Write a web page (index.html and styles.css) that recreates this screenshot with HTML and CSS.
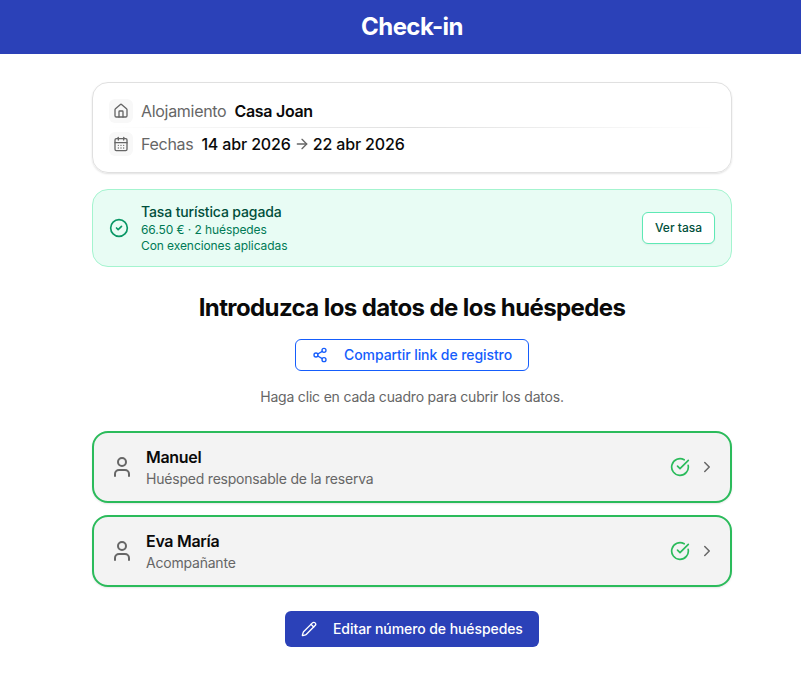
FILE: index.html
```html
<!DOCTYPE html>
<html lang="es">
<head>
    <meta charset="UTF-8">
    <meta name="viewport" content="width=device-width, initial-scale=1.0">
    <title>Check-in</title>
    <link rel="stylesheet" href="styles.css">
</head>
<body>
    <div class="page">
        <header class="topbar">
            <h1>Check-in</h1>
        </header>
        <main class="content">
            <section class="booking">
                <div class="booking-row">
                    <span class="icon-box">
                        <svg class="icon icon-16" viewBox="0 0 24 24"><path d="M15 21v-8a1 1 0 0 0-1-1h-4a1 1 0 0 0-1 1v8"/><path d="M3 10a2 2 0 0 1 .709-1.528l7-5.999a2 2 0 0 1 2.582 0l7 5.999A2 2 0 0 1 21 10v9a2 2 0 0 1-2 2H5a2 2 0 0 1-2-2z"/></svg>
                    </span>
                    <span class="label">Alojamiento</span>
                    <span class="value value-place">Casa Joan</span>
                </div>
                <div class="divider"></div>
                <div class="booking-row">
                    <span class="icon-box">
                        <svg class="icon icon-16" viewBox="0 0 24 24"><path d="M8 2v4"/><path d="M16 2v4"/><rect width="18" height="18" x="3" y="4" rx="2"/><path d="M3 10h18"/><path d="M8 14h.01"/><path d="M12 14h.01"/><path d="M16 14h.01"/><path d="M8 18h.01"/><path d="M12 18h.01"/><path d="M16 18h.01"/></svg>
                    </span>
                    <span class="label">Fechas</span>
                    <span class="value dates">
                        <span>14 abr 2026</span>
                        <svg class="icon icon-16 arrow" viewBox="0 0 24 24"><path d="M5 12h14"/><path d="m12 5 7 7-7 7"/></svg>
                        <span>22 abr 2026</span>
                    </span>
                </div>
            </section>

            <section class="tax">
                <svg class="icon icon-20 tax-icon" viewBox="0 0 24 24"><circle cx="12" cy="12" r="10"/><path d="m9 12 2 2 4-4"/></svg>
                <div class="tax-text">
                    <p class="tax-title">Tasa turística pagada</p>
                    <p class="tax-line">66.50 € · 2 huéspedes</p>
                    <p class="tax-line">Con exenciones aplicadas</p>
                </div>
                <button class="tax-button" type="button">Ver tasa</button>
            </section>

            <h2>Introduzca los datos de los huéspedes</h2>
            <button class="button share" type="button">
                <svg class="icon icon-16" viewBox="0 0 24 24"><circle cx="18" cy="5" r="3"/><circle cx="6" cy="12" r="3"/><circle cx="18" cy="19" r="3"/><path d="m8.59 13.51 6.83 3.98"/><path d="m15.41 6.51-6.82 3.98"/></svg>
                <span>Compartir link de registro</span>
            </button>
            <p class="hint">Haga clic en cada cuadro para cubrir los datos.</p>

            <div class="guests">
                <div class="guest">
                    <svg class="icon icon-24" viewBox="0 0 24 24"><path d="M19 21v-2a4 4 0 0 0-4-4H9a4 4 0 0 0-4 4v2"/><circle cx="12" cy="7" r="4"/></svg>
                    <div class="guest-text">
                        <p class="guest-name">Manuel</p>
                        <p class="guest-role">Huésped responsable de la reserva</p>
                    </div>
                    <svg class="icon icon-20 done" viewBox="0 0 24 24"><path d="M21.801 10A10 10 0 1 1 17 3.335"/><path d="m9 11 3 3L22 4"/></svg>
                    <svg class="icon chevron" viewBox="0 0 24 24"><path d="m9 18 6-6-6-6"/></svg>
                </div>
                <div class="guest">
                    <svg class="icon icon-24" viewBox="0 0 24 24"><path d="M19 21v-2a4 4 0 0 0-4-4H9a4 4 0 0 0-4 4v2"/><circle cx="12" cy="7" r="4"/></svg>
                    <div class="guest-text">
                        <p class="guest-name">Eva María</p>
                        <p class="guest-role">Acompañante</p>
                    </div>
                    <svg class="icon icon-20 done" viewBox="0 0 24 24"><path d="M21.801 10A10 10 0 1 1 17 3.335"/><path d="m9 11 3 3L22 4"/></svg>
                    <svg class="icon chevron" viewBox="0 0 24 24"><path d="m9 18 6-6-6-6"/></svg>
                </div>
            </div>

            <button class="button edit" type="button">
                <svg class="icon icon-16" viewBox="0 0 24 24"><path d="M21.174 6.812a1 1 0 0 0-3.986-3.987L3.842 16.174a2 2 0 0 0-.5.83l-1.321 4.352a.5.5 0 0 0 .623.622l4.353-1.32a2 2 0 0 0 .83-.497z"/><path d="m15 5 4 4"/></svg>
                <span>Editar número de huéspedes</span>
            </button>
        </main>
    </div>
</body>
</html>
```
FILE: styles.css
```css
* { box-sizing: border-box; }
html { overflow: hidden; }
body {
    margin: 0;
    font-family: Inter, "Liberation Sans", sans-serif;
    color: #0a0a0a;
    background: #fff;
}
h1, h2, p { margin: 0; }
button { font-family: inherit; padding: 0; }
.page { width: 824px; }

.topbar {
    height: 54px;
    display: flex;
    align-items: center;
    justify-content: center;
    background: #2b41b8;
    color: #fff;
}
h1 { font-size: 24px; line-height: 32px; font-weight: 700; letter-spacing: -0.55px; }
.content {
    width: 640px;
    margin: 28px auto 0;
    display: flex;
    flex-direction: column;
    align-items: center;
}

.icon {
    flex: none;
    fill: none;
    stroke: currentColor;
    stroke-width: 2;
    stroke-linecap: round;
    stroke-linejoin: round;
}
.icon-16 { width: 16px; height: 16px; }
.icon-20 { width: 20px; height: 20px; }
.icon-24 { width: 24px; height: 24px; }

.booking {
    width: 100%;
    padding: 16px;
    display: flex;
    flex-direction: column;
    gap: 4px;
    border: 1px solid #e0e0e0;
    border-radius: 16px;
    box-shadow: 0 1px 2px rgba(0, 0, 0, 0.12);
}
.booking-row {
    height: 24px;
    display: flex;
    align-items: center;
    gap: 8px;
    font-size: 16px;
    line-height: 24px;
}
.icon-box {
    width: 24px;
    height: 24px;
    display: flex;
    align-items: center;
    justify-content: center;
    border-radius: 6px;
    background: #f8f8f8;
    color: #666;
}
.label { color: #666; letter-spacing: -0.3px; }
.value { font-weight: 500; letter-spacing: -0.3px; }
.value-place { font-weight: 600; }
.dates { display: flex; align-items: center; gap: 3px; letter-spacing: -0.15px; }
.arrow { color: #666; }
.divider {
    height: 1px;
    background: linear-gradient(to right, transparent, #e0e0e0, transparent);
}

.tax {
    width: 100%;
    margin-top: 16px;
    padding: 12px 16px;
    display: flex;
    align-items: center;
    gap: 12px;
    border: 1px solid #a4f4cf;
    border-radius: 16px;
    background: #e8fcf4;
}
.tax-icon { color: #099765; }
.tax-text { flex: 1; }
.tax-title { font-size: 14px; line-height: 20px; font-weight: 500; letter-spacing: -0.13px; color: #004f3b; }
.tax-line { font-size: 12px; line-height: 16px; letter-spacing: -0.08px; color: #007a55; }
.tax-button {
    width: 73px;
    height: 32px;
    padding-bottom: 2px;
    border: 1px solid #5ee9b5;
    border-radius: 6px;
    background: #fff;
    color: #004f3b;
    font-size: 12px;
    font-weight: 500;
    box-shadow: 0 1px 2px rgba(0, 0, 0, 0.05);
}

h2 { margin-top: 25px; font-size: 24px; line-height: 32px; font-weight: 700; letter-spacing: -0.6px; }
.button {
    display: flex;
    align-items: center;
    gap: 16px;
    padding: 0 16px;
    border-radius: 6px;
    font-size: 14px;
    line-height: 20px;
    font-weight: 500;
    letter-spacing: -0.08px;
    white-space: nowrap;
}
.share {
    width: 234px;
    height: 32px;
    margin-top: 15px;
    border: 1px solid #155dfc;
    background: #fff;
    color: #155dfc;
}
.hint { margin-top: 16px; font-size: 14px; line-height: 20px; letter-spacing: -0.19px; color: #666; }

.guests {
    width: 100%;
    margin-top: 24px;
    display: flex;
    flex-direction: column;
    gap: 12px;
}
.guest {
    height: 72px;
    padding: 0 16px;
    display: flex;
    align-items: center;
    border: 2px solid #2bbb5b;
    border-radius: 16px;
    background: #f3f3f3;
    color: #666;
    box-shadow: 0 1px 2px rgba(0, 0, 0, 0.1);
}
.guest-text { flex: 1; margin-left: 12px; }
.guest-name { font-size: 16px; line-height: 24px; font-weight: 600; color: #0a0a0a; letter-spacing: -0.3px; }
.guest-role { font-size: 14px; line-height: 20px; letter-spacing: -0.21px; }
.done { color: #2bbb5b; }
.chevron { width: 18px; height: 18px; margin: 0 -1.5px 0 7.5px; }

.edit {
    width: 254px;
    height: 36px;
    margin-top: 24px;
    border: 0;
    background: #2b41b8;
    color: #fff;
}
```
